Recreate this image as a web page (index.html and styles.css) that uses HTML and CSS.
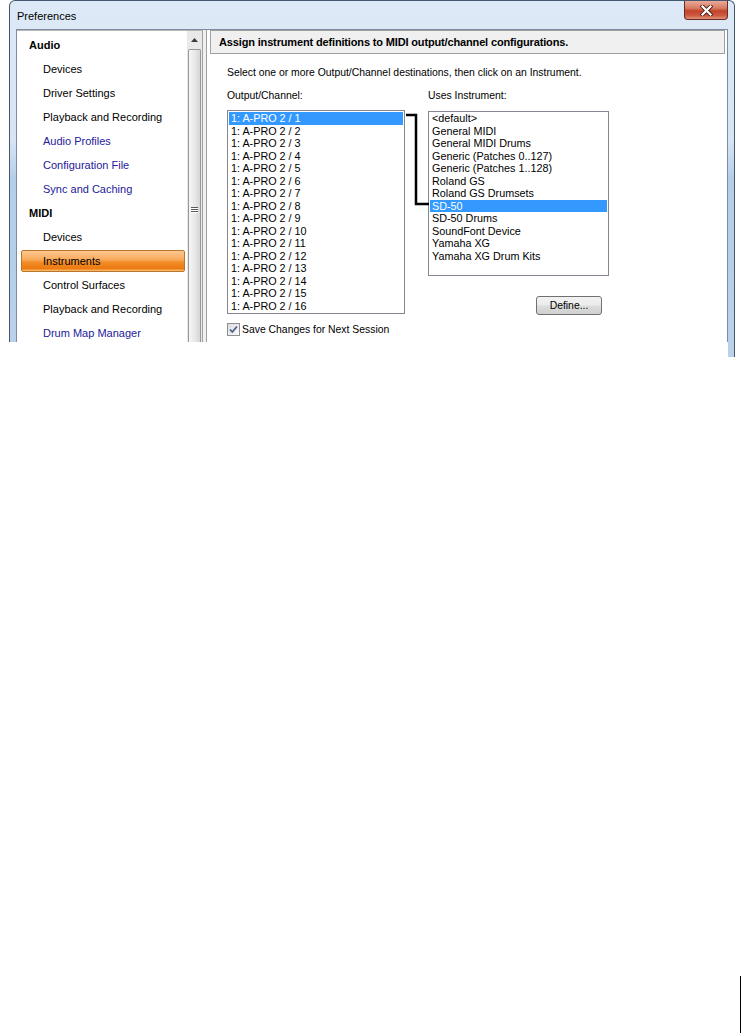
FILE: index.html
```html
<!DOCTYPE html>
<html>
<head>
    <title>Preferences</title>
    <link rel="stylesheet" href="styles.css">
</head>
<body>
    <div class="window">
        <div class="titlebar">
            <span class="title">Preferences</span>
            <div class="close">
                <svg width="13" height="11" viewBox="0 0 13 11">
                    <path d="M2.5 1.5 L10.5 9.5 M10.5 1.5 L2.5 9.5" stroke="#4b1d14" stroke-width="4" stroke-linecap="square"/>
                    <path d="M2.5 1.5 L10.5 9.5 M10.5 1.5 L2.5 9.5" stroke="#fff" stroke-width="2.2" stroke-linecap="square"/>
                </svg>
            </div>
        </div>

        <div class="client">
            <div class="tree-panel">
                <ul class="tree">
                    <li class="group">Audio</li>
                    <li>Devices</li>
                    <li>Driver Settings</li>
                    <li>Playback and Recording</li>
                    <li class="link">Audio Profiles</li>
                    <li class="link">Configuration File</li>
                    <li class="link">Sync and Caching</li>
                    <li class="group">MIDI</li>
                    <li>Devices</li>
                    <li class="selected">Instruments</li>
                    <li>Control Surfaces</li>
                    <li>Playback and Recording</li>
                    <li class="link">Drum Map Manager</li>
                </ul>
                <div class="scrollbar">
                    <div class="sb-up">
                        <svg width="7" height="4" viewBox="0 0 7 4"><path d="M0 4 L3.5 0 L7 4 Z" fill="#3c3c3c"/></svg>
                    </div>
                    <div class="sb-thumb">
                        <div class="grip"></div>
                        <div class="grip"></div>
                        <div class="grip"></div>
                    </div>
                </div>
            </div>

            <div class="page">
                <div class="page-header">Assign instrument definitions to MIDI output/channel configurations.</div>
                <div class="page-body">
                    <p class="hint">Select one or more Output/Channel destinations, then click on an Instrument.</p>

                    <div class="columns">
                        <div class="col col-out">
                            <div class="field-label">Output/Channel:</div>
                            <ul class="listbox list-out">
                                <li class="sel">1: A-PRO 2 / 1</li>
                                <li>1: A-PRO 2 / 2</li>
                                <li>1: A-PRO 2 / 3</li>
                                <li>1: A-PRO 2 / 4</li>
                                <li>1: A-PRO 2 / 5</li>
                                <li>1: A-PRO 2 / 6</li>
                                <li>1: A-PRO 2 / 7</li>
                                <li>1: A-PRO 2 / 8</li>
                                <li>1: A-PRO 2 / 9</li>
                                <li>1: A-PRO 2 / 10</li>
                                <li>1: A-PRO 2 / 11</li>
                                <li>1: A-PRO 2 / 12</li>
                                <li>1: A-PRO 2 / 13</li>
                                <li>1: A-PRO 2 / 14</li>
                                <li>1: A-PRO 2 / 15</li>
                                <li>1: A-PRO 2 / 16</li>
                            </ul>
                        </div>
                        <div class="col col-inst">
                            <div class="field-label">Uses Instrument:</div>
                            <ul class="listbox list-inst">
                                <li>&lt;default&gt;</li>
                                <li>General MIDI</li>
                                <li>General MIDI Drums</li>
                                <li>Generic (Patches 0..127)</li>
                                <li>Generic (Patches 1..128)</li>
                                <li>Roland GS</li>
                                <li>Roland GS Drumsets</li>
                                <li class="sel">SD-50</li>
                                <li>SD-50 Drums</li>
                                <li>SoundFont Device</li>
                                <li>Yamaha XG</li>
                                <li>Yamaha XG Drum Kits</li>
                            </ul>
                            <button class="btn">Define...</button>
                        </div>
                        <!-- bracket linking the selected channel to its instrument -->
                        <svg class="bracket" width="210" height="130" viewBox="0 0 210 130">
                            <path d="M179 26 L189 26 L189 115 L202 115" fill="none" stroke="#000" stroke-width="2.5"/>
                        </svg>
                    </div>

                    <label class="check">
                        <svg class="box" width="13" height="13" viewBox="0 0 13 13">
                            <defs>
                                <linearGradient id="cb" x1="0" y1="0" x2="1" y2="1">
                                    <stop offset="0" stop-color="#dcdcdc"/>
                                    <stop offset="1" stop-color="#fbfbfb"/>
                                </linearGradient>
                            </defs>
                            <rect x="0.5" y="0.5" width="12" height="12" fill="url(#cb)" stroke="#8e8f8f"/>
                            <path d="M3 6.5 L5.3 9 L10 3.5" fill="none" stroke="#4a5f8c" stroke-width="1.8"/>
                        </svg>
                        Save Changes for Next Session
                    </label>
                </div>
            </div>
        </div>
    </div>
    <div class="edge-mark"></div>
</body>
</html>
```
FILE: styles.css
```css
body {
    margin: 0;
    background: #fff;
    font-family: "Liberation Sans", Arial, sans-serif;
}

ul {
    list-style: none;
    margin: 0;
    padding: 0;
}

/* window frame */

.window {
    position: relative;
    margin-left: 9px;
    width: 726px;
    height: 342px;
    box-sizing: border-box;
    border: 1px solid #45576d;
    border-bottom: none;
    border-radius: 6px 6px 0 0;
    background: linear-gradient(#dde9f6, #d6e4f4 140px, #b4cee9 178px, #b9d1ea);
    display: flex;
    flex-direction: column;
}

/* the right edge of the frame runs a little lower in the capture */
.window::after {
    content: "";
    position: absolute;
    right: -1px;
    top: 100%;
    width: 6px;
    height: 15px;
    border-right: 1px solid #45576d;
    background: #b9d1ea;
}

.titlebar {
    flex-shrink: 0;
    height: 28px;
    display: flex;
    align-items: flex-start;
    padding-left: 7px;
}

.title {
    padding-top: 8px;
    font-size: 11px;
    line-height: 14px;
    color: #000;
}

.close {
    margin-left: auto;
    margin-right: 6px;
    width: 44px;
    height: 19px;
    box-sizing: border-box;
    border: 1px solid #6a2c21;
    border-top: none;
    border-radius: 0 0 4px 4px;
    background: linear-gradient(#e9aa9a, #d97a63 40%, #c4432b 55%, #cc5a40 80%, #e1937b);
    display: flex;
    align-items: center;
    justify-content: center;
}

.client {
    flex: 1;
    min-height: 0;
    overflow: hidden;
    display: flex;
    gap: 3px;
    margin: 0 6px;
    border: 1px solid #7f8ca0;
    border-bottom: none;
    background: #f0f0f0;
}

/* navigation tree */

.tree-panel {
    width: 185px;
    display: flex;
    background: #fff;
    border-top: 1px solid #b5b5b5;
    border-right: 1px solid #a0a0a0;
}

.tree {
    flex: 1;
    padding-top: 2px;
    font-size: 11px;
}

.tree li {
    height: 24px;
    line-height: 24px;
    margin: 0 2px 0 4px;
    padding-left: 22px;
    color: #000;
    white-space: nowrap;
}

.tree li.group {
    padding-left: 8px;
    font-weight: bold;
}

.tree li.link {
    color: #24209c;
}

.tree li.selected {
    height: 22px;
    line-height: 20px;
    margin-top: 1px;
    margin-bottom: 1px;
    padding-left: 21px;
    box-sizing: border-box;
    border: 1px solid #b8762f;
    border-radius: 2px;
    background: linear-gradient(#fcc890, #f9aa5c 42%, #f28b25 58%, #ec7a10 88%, #fbc374);
}

.scrollbar {
    width: 15px;
    display: flex;
    flex-direction: column;
    background: #e9e9e9;
}

.sb-up {
    height: 17px;
    display: flex;
    align-items: center;
    justify-content: center;
    padding-top: 1px;
    box-sizing: border-box;
}

.sb-thumb {
    flex: 1;
    margin: 1px 1px 0;
    border: 1px solid #979797;
    border-bottom: none;
    border-radius: 2px 2px 0 0;
    background: linear-gradient(to right, #f6f6f6, #e9e9e9 50%, #d6d6d6);
    display: flex;
    flex-direction: column;
    align-items: center;
    padding-top: 157px;
}

.grip {
    width: 7px;
    height: 1px;
    margin-bottom: 1px;
    background: #5a5a5a;
    box-shadow: 0 1px 0 #fff;
}

/* page */

.page {
    flex: 1;
    background: #fff;
    border-left: 1px solid #a0a0a0;
}

.page-header {
    margin: 0 2px 0 3px;
    height: 24px;
    box-sizing: border-box;
    padding-left: 8px;
    border: 1px solid #a0a0a0;
    background: #f0f0f0;
    font-size: 11px;
    font-weight: bold;
    letter-spacing: -0.15px;
    line-height: 22px;
}

.page-body {
    padding-left: 20px;
    font-size: 10.4px;
}

.hint {
    margin: 12px 0 0;
    line-height: 13px;
}

.columns {
    position: relative;
    display: flex;
    align-items: flex-start;
    gap: 23px;
    margin-top: 10px;
}

.col {
    display: flex;
    flex-direction: column;
}

.field-label {
    line-height: 13px;
    margin-bottom: 8px;
}

.listbox {
    box-sizing: border-box;
    border: 1px solid #828790;
    padding: 1px;
    font-size: 10.8px;
}

.listbox li {
    height: 12.5px;
    line-height: 12.5px;
    padding-left: 2px;
    white-space: nowrap;
}

.listbox li.sel {
    background: #3399ff;
    color: #fff;
}

.list-out {
    width: 178px;
    height: 204px;
}

.list-inst {
    width: 181px;
    height: 165px;
    margin-top: 1px;
    padding-top: 0;
}

.btn {
    align-self: flex-end;
    margin: 20px 7px 0 0;
    width: 66px;
    height: 19px;
    padding: 0;
    border: 1px solid #707070;
    border-radius: 3px;
    background: linear-gradient(#f2f2f2, #ebebeb 48%, #dddddd 52%, #cfcfcf);
    font-family: "Liberation Sans", Arial, sans-serif;
    font-size: 10.4px;
    color: #000;
}

.bracket {
    position: absolute;
    left: 0;
    top: 0;
    pointer-events: none;
}

.check {
    display: flex;
    align-items: center;
    gap: 2px;
    margin-top: 8px;
    height: 13px;
    line-height: 13px;
}

.edge-mark {
    margin: 634px 0 0 740px;
    width: 1px;
    height: 57px;
    background: #000;
}
```
